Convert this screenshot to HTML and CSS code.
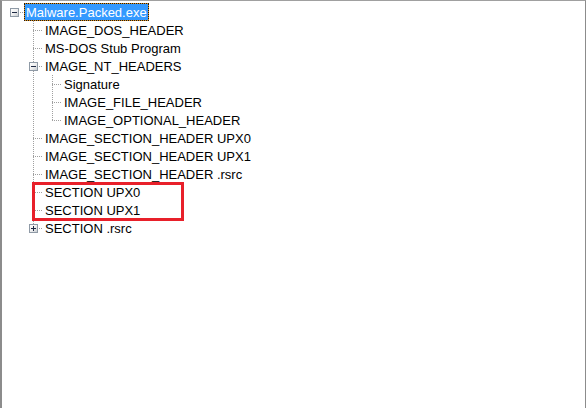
FILE: index.html
```html
<!DOCTYPE html>
<html>
<head>
<meta charset="utf-8">
<link rel="stylesheet" href="styles.css">
</head>
<body>
<div class="tree">
  <div class="row">
    <span class="cell hline"><span class="exp minus"></span></span>
    <span class="label selected">Malware.Packed.exe</span>
  </div>
  <div class="row">
    <span class="cell"></span><span class="cell tee"></span>
    <span class="label">IMAGE_DOS_HEADER</span>
  </div>
  <div class="row">
    <span class="cell"></span><span class="cell tee"></span>
    <span class="label">MS-DOS Stub Program</span>
  </div>
  <div class="row">
    <span class="cell"></span><span class="cell tee"><span class="exp minus"></span></span>
    <span class="label">IMAGE_NT_HEADERS</span>
  </div>
  <div class="row">
    <span class="cell"></span><span class="cell pass"></span><span class="cell tee"></span>
    <span class="label">Signature</span>
  </div>
  <div class="row">
    <span class="cell"></span><span class="cell pass"></span><span class="cell tee"></span>
    <span class="label">IMAGE_FILE_HEADER</span>
  </div>
  <div class="row">
    <span class="cell"></span><span class="cell pass"></span><span class="cell ell"></span>
    <span class="label">IMAGE_OPTIONAL_HEADER</span>
  </div>
  <div class="row">
    <span class="cell"></span><span class="cell tee"></span>
    <span class="label">IMAGE_SECTION_HEADER UPX0</span>
  </div>
  <div class="row">
    <span class="cell"></span><span class="cell tee"></span>
    <span class="label">IMAGE_SECTION_HEADER UPX1</span>
  </div>
  <div class="row">
    <span class="cell"></span><span class="cell tee"></span>
    <span class="label">IMAGE_SECTION_HEADER .rsrc</span>
  </div>
  <div class="row">
    <span class="cell"></span><span class="cell tee"></span>
    <span class="label">SECTION UPX0</span>
  </div>
  <div class="row">
    <span class="cell"></span><span class="cell tee"></span>
    <span class="label">SECTION UPX1</span>
  </div>
  <div class="row">
    <span class="cell"></span><span class="cell ell"><span class="exp plus"></span></span>
    <span class="label">SECTION .rsrc</span>
  </div>
  <div class="highlight"></div>
</div>
</body>
</html>
```

FILE: styles.css
```css
html, body {
  margin: 0;
  padding: 0;
  background: #ffffff;
}

.tree {
  position: relative;
  box-sizing: border-box;
  width: 586px;
  height: 408px;
  border-top: 1px solid #a0a0a0;
  border-left: 2px solid #8c8c8c;
  border-right: 1px solid #8c8c8c;
  padding: 2px 0 0 2px;
  font-family: "Liberation Sans", Arial, sans-serif;
  font-size: 13px;
  color: #000;
  background: #fff;
}

.row {
  display: flex;
  align-items: flex-start;
  height: 18px;
}

.cell {
  display: flex;
  align-items: flex-start;
  flex: 0 0 19px;
  width: 19px;
  height: 18px;
  background-repeat: no-repeat;
}

.hline {
  background-image: repeating-linear-gradient(to right, #a0a0a0 0 1px, transparent 1px 2px);
  background-size: 9px 1px;
  background-position: 10px 9px;
}

.pass {
  background-image: repeating-linear-gradient(to bottom, #a0a0a0 0 1px, transparent 1px 2px);
  background-size: 1px 18px;
  background-position: 10px 0;
}

.tee {
  background-image:
    repeating-linear-gradient(to bottom, #a0a0a0 0 1px, transparent 1px 2px),
    repeating-linear-gradient(to right, #a0a0a0 0 1px, transparent 1px 2px);
  background-size: 1px 18px, 9px 1px;
  background-position: 10px 0, 10px 9px;
}

.ell {
  background-image:
    repeating-linear-gradient(to bottom, #a0a0a0 0 1px, transparent 1px 2px),
    repeating-linear-gradient(to right, #a0a0a0 0 1px, transparent 1px 2px);
  background-size: 1px 10px, 9px 1px;
  background-position: 10px 0, 10px 9px;
}

.exp {
  position: relative;
  box-sizing: border-box;
  width: 9px;
  height: 9px;
  margin: 5px 0 0 6px;
  border: 1px solid #8f9aa6;
  background: linear-gradient(135deg, #ffffff 0%, #f0f0f0 50%, #c8cdd2 100%);
}

.exp::before {
  content: "";
  position: absolute;
  left: 1px;
  top: 3px;
  width: 5px;
  height: 1px;
  background: #1f2a44;
}

.plus::after {
  content: "";
  position: absolute;
  left: 3px;
  top: 1px;
  width: 1px;
  height: 5px;
  background: #1f2a44;
}

.label {
  box-sizing: border-box;
  height: 18px;
  line-height: 15px;
  padding: 1px 1px 0;
  margin-left: 1px;
  border: 1px solid transparent;
  white-space: nowrap;
}

.selected {
  color: #ffffff;
  border: 1px dotted #1a1a1a;
  background: linear-gradient(#3399ff, #3399ff) padding-box, #e0901c;
}

.highlight {
  position: absolute;
  left: 30px;
  top: 181px;
  width: 152px;
  height: 39px;
  box-sizing: border-box;
  border: 3px solid #e8202a;
}
```
